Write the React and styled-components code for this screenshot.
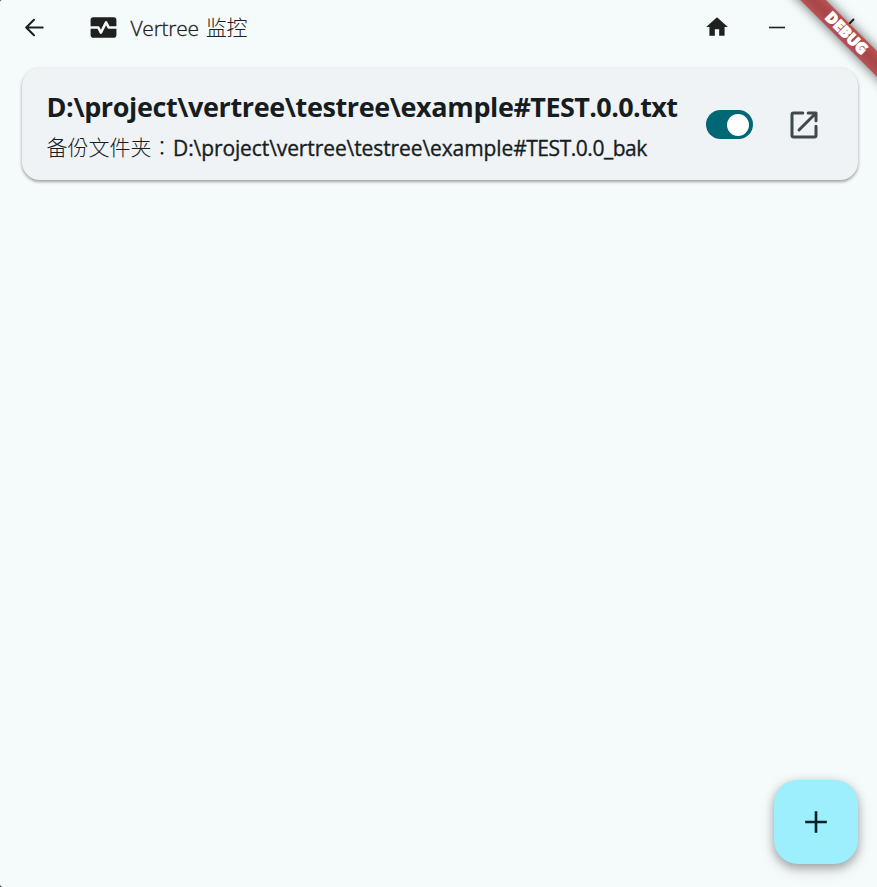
import React from "react";
import styled, { createGlobalStyle } from "styled-components";

const Global = createGlobalStyle`
  * { box-sizing: border-box; }
  html, body { margin: 0; padding: 0; background: #303638; overflow: hidden; }
  button { border: 0; padding: 0; background: none; display: flex; align-items: center; justify-content: center; color: inherit; }
  svg { display: block; }
`;

const Window = styled.div`
  position: relative;
  width: 877px;
  height: 887px;
  display: flex;
  flex-direction: column;
  overflow: hidden;
  background: #f5fafb;
  border-radius: 2px 0 0 3px;
  color: #171d1e;
  font-family: "Open Sans", "Noto Sans CJK SC", sans-serif;
`;

const TitleBar = styled.header`
  display: flex;
  align-items: center;
  height: 54px;
  padding-left: 20px;
  color: #1f2020;
`;

const IconButton = styled.button`
  width: ${(p) => p.$w}px;
  height: 54px;
`;

const CloseButton = styled(IconButton)`
  margin-left: 7px;
`;

const AppIcon = styled.div`
  margin-left: 39.5px;
  width: 31px;
`;

const AppTitle = styled.h1`
  display: flex;
  gap: 7px;
  flex: 1;
  margin: 1px 0 0 12px;
  font-size: 21px;
  line-height: 30px;
  font-weight: 300;
  white-space: nowrap;
`;

const Latin = styled.span`
  letter-spacing: ${(p) => p.$spacing}px;
  -webkit-text-stroke: ${(p) => p.$stroke || 0}px currentColor;
`;

const Cjk = styled.span`
  font-family: "Noto Sans CJK TC", sans-serif;
  font-weight: 300;
`;

const TitleCjk = styled(Cjk)`
  font-family: "Noto Sans CJK SC", sans-serif;
  margin-top: -2px;
  letter-spacing: -0.3px;
`;

const Card = styled.section`
  display: flex;
  align-items: center;
  height: 112px;
  margin: 14px 19px 0 22px;
  padding: 1px 0 0 24.5px;
  border-radius: 18px;
  background: #eff3f6;
  box-shadow: 0 2px 3px rgba(0, 0, 0, 0.28), 0 1px 4px rgba(0, 0, 0, 0.12);
`;

const Details = styled.div`
  width: 659px;
  padding-top: 1px;
  white-space: nowrap;
`;

const FilePath = styled.h2`
  margin: 0;
  font-size: 27px;
  line-height: 40px;
  font-weight: 700;
`;

const Backup = styled.p`
  display: flex;
  margin: 5px 0 0;
  font-size: 21px;
  line-height: 32px;
  font-weight: 500;
`;

const Label = styled(Cjk)`
  width: 126.5px;
  margin-top: -2px;
`;

const Switch = styled.button`
  && {
    width: 47px;
    height: 29px;
    border-radius: 15px;
    background: #006874;
    justify-content: flex-end;
    padding-right: 3.5px;
  }
`;

const Thumb = styled.span`
  width: 22px;
  height: 22px;
  border-radius: 50%;
  background: #fff;
`;

const OpenButton = styled.button`
  width: 36px;
  height: 36px;
  margin-left: 33.5px;
  && { color: #3f484a; }
`;

const Fab = styled.button`
  position: absolute;
  right: 19px;
  bottom: 23px;
  width: 84px;
  height: 84px;
  && {
    border-radius: 24px;
    background: #9eeffd;
    color: #001f24;
  }
  box-shadow: 0 4px 8px rgba(0, 0, 0, 0.22), 0 6px 16px rgba(0, 0, 0, 0.13), 0 1px 12px rgba(0, 0, 0, 0.08);
`;

const Ribbon = styled.div`
  position: absolute;
  left: 755px;
  top: 23px;
  width: 180px;
  height: 18px;
  padding-left: 4px;
  transform: rotate(45deg);
  background: linear-gradient(#b75154, #a74547 50%, #b75154);
  box-shadow: 0 0 12px rgba(0, 0, 0, 0.6);
  color: #fff;
  font-size: 15.3px;
  line-height: 17px;
  font-weight: 800;
  text-align: center;
  -webkit-text-stroke: 0.9px #fff;
`;

const Icon = ({ size, d }) => (
  <svg width={size} height={size} viewBox="0 0 24 24" fill="currentColor">
    <path d={d} />
  </svg>
);

const Stroke = ({ size, width, d, cap = "butt" }) => (
  <svg
    width={size}
    height={size}
    viewBox={`0 0 ${size} ${size}`}
    fill="none"
    stroke="currentColor"
    strokeWidth={width}
    strokeLinecap={cap}
    strokeLinejoin={cap === "round" ? "round" : "miter"}
  >
    <path d={d} />
  </svg>
);

const MONITOR =
  "M15.11 12.45 14 10.24l-3.11 6.21c-.16.34-.51.55-.89.55s-.73-.21-.89-.55L7.38 13H2v5c0 1.1.9 2 2 2h16c1.1 0 2-.9 2-2v-5h-6c-.38 0-.73-.21-.89-.55z M20 4H4c-1.1 0-2 .9-2 2v5h6c.38 0 .73.21.89.55L10 13.76l3.11-6.21c.34-.68 1.45-.68 1.79 0L16.62 11H22V6c0-1.1-.9-2-2-2z";
const HOME = "M10 20v-6h4v6h5v-8h3L12 3 2 12h3v8z";
const OPEN =
  "M16.8 6H7.5Q6 6 6 7.5V28.5Q6 30 7.5 30H28.5Q30 30 30 28.5V19.2M22.2 6H30V13.8M30 6L13 23";

export default function App() {
  return (
    <>
      <Global />
      <Window>
        <TitleBar>
          <IconButton $w={28} aria-label="Back">
            <Stroke size={24} width={2} cap="round" d="M20.7 12.5H4.5M12 4.7L4.2 12.5L12 20.3" />
          </IconButton>
          <AppIcon>
            <Icon size={31} d={MONITOR} />
          </AppIcon>
          <AppTitle>
            <Latin $spacing={-0.25} $stroke={0.3}>Vertree</Latin>
            <TitleCjk>监控</TitleCjk>
          </AppTitle>
          <IconButton $w={60} aria-label="Home">
            <Icon size={26} d={HOME} />
          </IconButton>
          <IconButton $w={60} aria-label="Minimize">
            <Stroke size={20} width={1.6} d="M2 10.5H18" />
          </IconButton>
          <CloseButton $w={63} aria-label="Close">
            <Stroke size={20} width={2} d="M2 18L18 2M2 2L18 18" />
          </CloseButton>
        </TitleBar>
        <Card>
          <Details>
            <FilePath>
              <Latin $spacing={-0.39}>D:\project\vertree\testree\example</Latin>
              <Latin $spacing={-0.6}>#TEST.0.0.txt</Latin>
            </FilePath>
            <Backup>
              <Label>备份文件夹：</Label>
              <Latin $spacing={-0.1} $stroke={0.35}>D:\project\vertree\testree\example</Latin>
              <Latin $spacing={-0.46} $stroke={0.35}>#TEST.0.0_bak</Latin>
            </Backup>
          </Details>
          <Switch role="switch" aria-checked="true">
            <Thumb />
          </Switch>
          <OpenButton aria-label="Open folder">
            <Stroke size={36} width={3} cap="round" d={OPEN} />
          </OpenButton>
        </Card>
        <Fab aria-label="Add">
          <Stroke size={24} width={2.6} d="M12 1.2V22.8M1.2 12H22.8" />
        </Fab>
        <Ribbon>DEBUG</Ribbon>
      </Window>
    </>
  );
}
